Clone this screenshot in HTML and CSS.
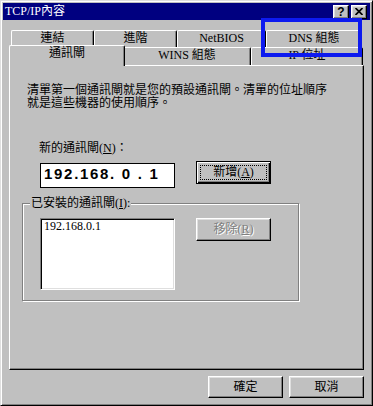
FILE: index.html
```html
<!DOCTYPE html>
<html lang="zh-Hant">
<head>
<meta charset="utf-8">
<title>TCP/IP內容</title>
<link rel="stylesheet" href="styles.css">
</head>
<body>
<div class="window">
  <div class="titlebar">
    <span class="title">TCP/IP內容</span>
    <div class="tbtns">
      <span class="tbtn help">?</span>
      <span class="tbtn close"><svg width="8" height="7" viewBox="0 0 8 7"><path d="M0.5 0 L7.5 7 M7.5 0 L0.5 7" stroke="#000" stroke-width="1.7"/></svg></span>
    </div>
  </div>
  <div class="tabs">
    <div class="tabrow back">
      <div class="tab t-link">連結</div>
      <div class="tab t-adv">進階</div>
      <div class="tab t-nb">NetBIOS</div>
      <div class="tab t-dns">DNS 組態</div>
    </div>
    <div class="tabrow front">
      <div class="tab sel t-gw">通訊閘</div>
      <div class="tab t-wins">WINS 組態</div>
      <div class="tab t-ip">IP 位址</div>
    </div>
  </div>
  <div class="panel">
    <p class="desc">清單第一個通訊閘就是您的預設通訊閘。清單的位址順序<br>就是這些機器的使用順序。</p>
    <div class="newlabel">新的通訊閘(<u>N</u>)：</div>
    <div class="newrow">
      <div class="ipfield">192.168. 0 . 1</div>
      <div class="btn default"><div class="focus">新增(<u>A</u>)</div></div>
    </div>
    <div class="group">
      <div class="legend"><span>已安裝的通訊閘(<u>I</u>):</span></div>
      <div class="group-body">
        <div class="listbox"><div class="item">192.168.0.1</div></div>
        <div class="btn disabled">移除(<u>R</u>)</div>
      </div>
    </div>
  </div>
  <div class="footer">
    <div class="btn fbtn">確定</div>
    <div class="btn fbtn">取消</div>
  </div>
  <div class="annot"></div>
</div>
</body>
</html>
```
FILE: styles.css
```css
* { box-sizing: border-box; }
html, body { margin: 0; padding: 0; }
body {
  width: 373px;
  height: 406px;
  overflow: hidden;
  background: #c0c0c0;
  font-family: "Liberation Serif", "Noto Sans CJK TC", serif;
  font-size: 12px;
  line-height: 13px;
  color: #000;
}
.window {
  position: relative;
  width: 373px;
  height: 406px;
  background: #c0c0c0;
  border: 1px solid;
  border-color: #dfdfdf #000 #000 #dfdfdf;
  box-shadow: inset 1px 1px #fff, inset -1px -1px #808080;
  padding: 2px;
}
.titlebar {
  height: 17px;
  background: #000080;
  color: #fff;
  display: flex;
  align-items: center;
  justify-content: space-between;
  padding: 0 3px 0 2px;
}
.title { line-height: 13px; }
.tbtns { display: flex; gap: 2px; }
.tbtn {
  width: 16px;
  height: 14px;
  background: #c0c0c0;
  color: #000;
  border: 1px solid;
  border-color: #fff #000 #000 #fff;
  box-shadow: inset -1px -1px #808080, inset 1px 1px #dfdfdf;
  display: flex;
  align-items: center;
  justify-content: center;
}
.help {
  font-family: "Liberation Sans", sans-serif;
  font-weight: bold;
  font-size: 12px;
  line-height: 12px;
}
.tabs { margin: 10px 0 0 6px; }
.tabrow { display: flex; margin-left: 2px; }
.tabrow.back { height: 17px; }
.tabrow.front { height: 18px; }
.tab {
  height: 100%;
  border-top: 1px solid #fff;
  border-left: 1px solid #fff;
  border-right: 1px solid #000;
  box-shadow: inset -1px 0 #808080;
  border-radius: 2px 2px 0 0;
  text-align: center;
  padding-top: 1px;
  white-space: nowrap;
  background: #c0c0c0;
}
.t-link { width: 83px; }
.t-adv { width: 83px; }
.t-nb { width: 89px; }
.t-dns { width: 96px; }
.t-gw { width: 116px; }
.t-wins { width: 128px; }
.t-ip { width: 112px; }
.tab.sel {
  position: relative;
  z-index: 1;
  height: 21px;
  margin: -2px -2px 0 -2px;
}
.panel {
  width: 355px;
  height: 305px;
  margin-left: 6px;
  border: 1px solid;
  border-color: #fff #000 #000 #fff;
  box-shadow: inset -1px -1px #808080;
}
.desc {
  margin: 18px 0 0 17px;
  white-space: nowrap;
}
.newlabel { margin: 32px 0 0 29px; }
.newrow {
  display: flex;
  align-items: flex-start;
  margin: 6px 0 0 30px;
}
.ipfield {
  margin-top: 2px;
  width: 135px;
  height: 25px;
  border: 1px solid #000;
  background: #fff;
  font-family: "Liberation Sans", sans-serif;
  font-weight: bold;
  font-size: 15px;
  line-height: 19px;
  letter-spacing: 1.7px;
  padding-left: 3px;
  white-space: pre;
}
.btn {
  width: 75px;
  height: 23px;
  border: 1px solid;
  border-color: #fff #000 #000 #fff;
  box-shadow: inset -1px -1px #808080, inset 1px 1px #dfdfdf;
  display: flex;
  align-items: center;
  justify-content: center;
  white-space: nowrap;
}
.btn.default {
  margin-left: 21px;
  border-color: #000;
  box-shadow: inset 1px 1px #fff, inset -1px -1px #000, inset -2px -2px #808080;
  padding: 3px;
}
.focus {
  width: 100%;
  height: 100%;
  border: 1px dotted #000;
  display: flex;
  align-items: center;
  justify-content: center;
}
.group {
  width: 277px;
  height: 98px;
  margin: 15px 0 0 12px;
  border: 1px solid #808080;
  box-shadow: inset 1px 1px #fff, 1px 1px #fff;
}
.legend {
  margin: -7px 0 0 7px;
  height: 13px;
}
.legend span {
  background: #c0c0c0;
  padding: 0 1px;
}
.group-body {
  display: flex;
  align-items: flex-start;
  margin: 8px 0 0 17px;
}
.listbox {
  width: 135px;
  height: 72px;
  background: #fff;
  border: 1px solid;
  border-color: #808080 #fff #fff #808080;
  box-shadow: inset 1px 1px #000, inset -1px -1px #dfdfdf;
  padding: 1px 0 0 3px;
}
.btn.disabled {
  margin-left: 21px;
  color: #808080;
  text-shadow: 1px 1px #fff;
}
.footer {
  display: flex;
  justify-content: flex-end;
  gap: 6px;
  margin: 6px 6px 0 0;
}
.fbtn { height: 22px; }
.annot {
  position: absolute;
  left: 260px;
  top: 17px;
  width: 101px;
  height: 39px;
  border: 4px solid #0d1aef;
}
```
